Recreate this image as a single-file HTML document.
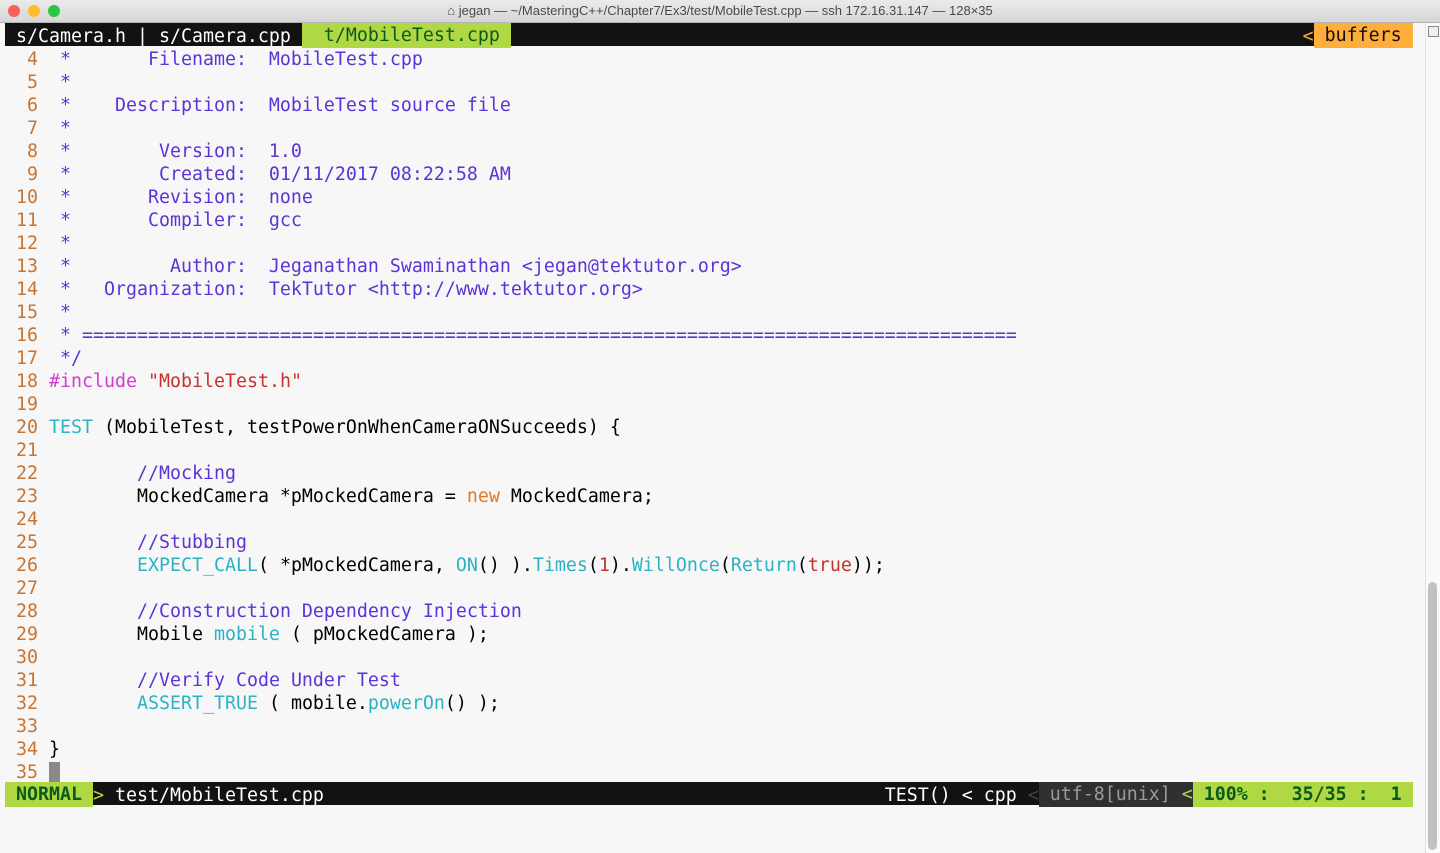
<!DOCTYPE html>
<html><head><meta charset="utf-8"><style>
html,body{margin:0;padding:0;width:1440px;height:853px;overflow:hidden;background:#f7f7f7}
#title{position:absolute;left:0;top:0;width:1440px;height:22px;background:linear-gradient(#ebebeb,#d6d6d6);border-bottom:1px solid #b4b4b4;font-family:"Liberation Sans","DejaVu Sans",sans-serif;font-size:13px;color:#4a4a4a;text-align:center;line-height:22px}
.dot{position:absolute;top:5px;width:12px;height:12px;border-radius:50%}
#scr{position:absolute;left:1425px;top:23px;width:15px;height:830px;background:#f9f9f9;border-left:1px solid #e2e2e2}
#thumb{position:absolute;left:1428px;top:582px;width:9px;height:268px;border-radius:5px;background:#c1c1c1}
#term{position:absolute;left:5px;top:23px;width:1408px;font-family:"DejaVu Sans Mono","Liberation Mono",monospace;font-size:18.27px;color:#000}
.l{height:21px;padding-top:2px;line-height:23px;white-space:pre}
.l span{vertical-align:top}
.n{color:#c87533}.c{color:#5b33d6}.t{color:#2ab3c2}.p{color:#d33ad0}.r{color:#c9302c}.o{color:#e07a2a}
.bk{background:#121212;color:#fff;height:21px}.gr{background:#afd843;color:#0b5a1a}.or{background:#ffad3b;color:#111}
.gy{background:#303030;color:#9a9a9a}
.bk span.gr,.bk span.or,.bk span.gy{display:inline-block;height:23px;margin-top:-2px;padding-top:2px;line-height:21px;vertical-align:top}
</style></head><body>
<div id="title"><span class="dot" style="left:8px;background:#fc5f57"></span><span class="dot" style="left:28px;background:#fdbc2e"></span><span class="dot" style="left:48px;background:#28c840"></span>&#8962; jegan — ~/MasteringC++/Chapter7/Ex3/test/MobileTest.cpp — ssh 172.16.31.147 — 128×35</div>
<div id="scr"><div style="position:absolute;left:2px;top:3px;width:9px;height:9px;border:1px solid #888;background:#eee"></div></div>
<div id="thumb"></div>
<div id="term"><div class="l bk"> s/Camera.h | s/Camera.cpp <span class="gr">  t/MobileTest.cpp </span>                                                                        <span style="color:#ffad3b">&lt;</span><span class="or"> buffers </span></div><div class="l"><span class="n">  4 </span><span class="c"> *       Filename:  MobileTest.cpp</span></div><div class="l"><span class="n">  5 </span><span class="c"> *</span></div><div class="l"><span class="n">  6 </span><span class="c"> *    Description:  MobileTest source file</span></div><div class="l"><span class="n">  7 </span><span class="c"> *</span></div><div class="l"><span class="n">  8 </span><span class="c"> *        Version:  1.0</span></div><div class="l"><span class="n">  9 </span><span class="c"> *        Created:  01/11/2017 08:22:58 AM</span></div><div class="l"><span class="n"> 10 </span><span class="c"> *       Revision:  none</span></div><div class="l"><span class="n"> 11 </span><span class="c"> *       Compiler:  gcc</span></div><div class="l"><span class="n"> 12 </span><span class="c"> *</span></div><div class="l"><span class="n"> 13 </span><span class="c"> *         Author:  Jeganathan Swaminathan &lt;jegan@tektutor.org&gt;</span></div><div class="l"><span class="n"> 14 </span><span class="c"> *   Organization:  TekTutor &lt;http://www.tektutor.org&gt;</span></div><div class="l"><span class="n"> 15 </span><span class="c"> *</span></div><div class="l"><span class="n"> 16 </span><span class="c"> * =====================================================================================</span></div><div class="l"><span class="n"> 17 </span><span class="c"> */</span></div><div class="l"><span class="n"> 18 </span><span class="p">#include</span> <span class="r">"MobileTest.h"</span></div><div class="l"><span class="n"> 19 </span></div><div class="l"><span class="n"> 20 </span><span class="t">TEST</span> (MobileTest, testPowerOnWhenCameraONSucceeds) {</div><div class="l"><span class="n"> 21 </span></div><div class="l"><span class="n"> 22 </span>        <span class="c">//Mocking</span></div><div class="l"><span class="n"> 23 </span>        MockedCamera *pMockedCamera = <span class="o">new</span> MockedCamera;</div><div class="l"><span class="n"> 24 </span></div><div class="l"><span class="n"> 25 </span>        <span class="c">//Stubbing</span></div><div class="l"><span class="n"> 26 </span>        <span class="t">EXPECT_CALL</span>( *pMockedCamera, <span class="t">ON</span>() ).<span class="t">Times</span>(<span class="r">1</span>).<span class="t">WillOnce</span>(<span class="t">Return</span>(<span class="r">true</span>));</div><div class="l"><span class="n"> 27 </span></div><div class="l"><span class="n"> 28 </span>        <span class="c">//Construction Dependency Injection</span></div><div class="l"><span class="n"> 29 </span>        Mobile <span class="t">mobile</span> ( pMockedCamera );</div><div class="l"><span class="n"> 30 </span></div><div class="l"><span class="n"> 31 </span>        <span class="c">//Verify Code Under Test</span></div><div class="l"><span class="n"> 32 </span>        <span class="t">ASSERT_TRUE</span> ( mobile.<span class="t">powerOn</span>() );</div><div class="l"><span class="n"> 33 </span></div><div class="l"><span class="n"> 34 </span>}</div><div class="l"><span class="n"> 35 </span><span style="background:#8a8a8a"> </span></div><div class="l bk"><span class="gr" style="font-weight:bold"> NORMAL </span><span style="color:#afd843">&gt;</span> test/MobileTest.cpp                                                   TEST() &lt; cpp <span style="color:#444">&lt;</span><span class="gy"> utf-8[unix] <span style="color:#afd843">&lt;</span></span><span class="gr" style="font-weight:bold"> 100% :  35/35 :  1 </span></div></div>
</body></html>
